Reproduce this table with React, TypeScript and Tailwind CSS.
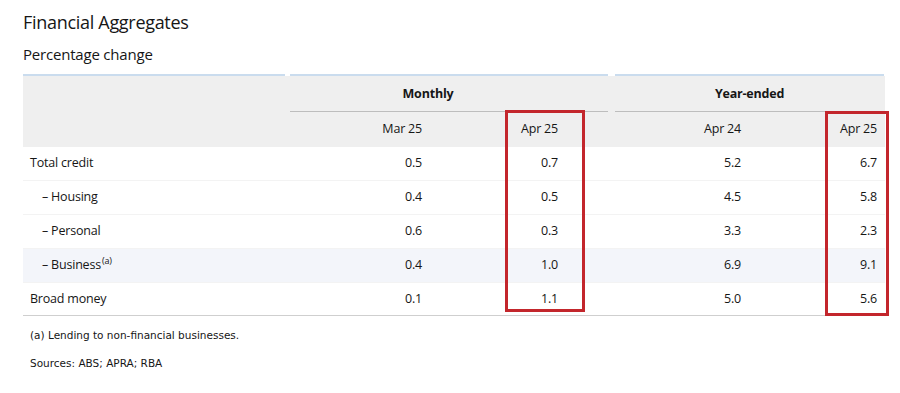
import React from "react";

const rows = [
    { label: "Total credit", indent: false, sup: false, shade: false, v: ["0.5", "0.7", "5.2", "6.7"] },
    { label: "– Housing", indent: true, sup: false, shade: false, v: ["0.4", "0.5", "4.5", "5.8"] },
    { label: "– Personal", indent: true, sup: false, shade: false, v: ["0.6", "0.3", "3.3", "2.3"] },
    { label: "– Business", indent: true, sup: true, shade: true, v: ["0.4", "1.0", "6.9", "9.1"] },
    { label: "Broad money", indent: false, sup: false, shade: false, v: ["0.1", "1.1", "5.0", "5.6"] },
];

const grid = "grid grid-cols-[267px_140px_136px_48px_135px_136px]";

export default function App() {
    return (
        <div className="w-[900px] h-[393px] bg-white text-[#161616] overflow-hidden" style={{ fontFamily: "'Open Sans', 'Noto Sans', sans-serif" }}>
            <div className="pl-[23px] pt-[10px]">
                <h1 className="text-[18px] leading-[24px] tracking-[-0.3px]">Financial Aggregates</h1>
                <h2 className="mt-[10px] text-[15px] leading-[20px] tracking-[-0.2px]">Percentage change</h2>

                <div className="relative mt-[10px] w-[862px] text-[12.5px] tracking-[-0.2px]">
                    {/* top rules */}
                    <div className="flex h-[2px]">
                        <div className="w-[262px] bg-[#cadcee]" />
                        <div className="ml-[5px] w-[318px] bg-[#cadcee]" />
                        <div className="ml-[7px] w-[269px] bg-[#cadcee]" />
                    </div>

                    {/* header */}
                    <div className={`${grid} bg-[#efefef]`}>
                        <div className="h-[36px]" />
                        <div className="col-span-3 flex flex-col">
                            <div className="flex-1 flex items-center justify-center pr-[48px] pt-[2px] font-bold">Monthly</div>
                            <div className="mr-[6px] h-px bg-[#bdbdbd]" />
                        </div>
                        <div className="col-span-2 flex flex-col">
                            <div className="flex-1 flex items-center justify-center pt-[2px] font-bold">Year-ended</div>
                            <div className="ml-px h-px bg-[#bdbdbd]" />
                        </div>
                        <div className="h-[35px]" />
                        <div className="flex items-center justify-end pr-[8px]">Mar 25</div>
                        <div className="flex items-center justify-end pr-[8px]">Apr 25</div>
                        <div />
                        <div className="flex items-center justify-end pr-[8px]">Apr 24</div>
                        <div className="flex items-center justify-end pr-[8px]">Apr 25</div>
                    </div>

                    {/* body */}
                    {rows.map((r, i) => (
                        <div
                            key={r.label}
                            className={`${grid} ${i === rows.length - 1 ? "h-[33px] border-b border-[#cfcfcf]" : "h-[34px] border-b border-[#f3f3f3]"} ${r.shade ? "bg-[#f3f5fa]" : "bg-white"}`}
                        >
                            <div className={`flex items-center ${r.indent ? "pl-[19px]" : "pl-[7px]"}`}>
                                {r.label}
                                {r.sup && <sup className="text-[9px] ml-px -top-[5px]">(a)</sup>}
                            </div>
                            <div className="flex items-center justify-end pr-[8px]">{r.v[0]}</div>
                            <div className="flex items-center justify-end pr-[8px]">{r.v[1]}</div>
                            <div />
                            <div className="flex items-center justify-end pr-[8px]">{r.v[2]}</div>
                            <div className="flex items-center justify-end pr-[8px]">{r.v[3]}</div>
                        </div>
                    ))}

                    {/* highlight boxes */}
                    <div className="absolute left-[482px] top-[36px] w-[80px] h-[202px] border-[3px] border-[#c3262c]" />
                    <div className="absolute left-[802px] top-[37px] w-[64px] h-[205px] border-[3px] border-[#c3262c]" />
                </div>

                <div className="pl-[7px] pt-[11px] text-[10.5px] leading-[16px]" style={{ fontFamily: "'DejaVu Sans', sans-serif" }}>
                    <p>(a) Lending to non-financial businesses.</p>
                    <p className="mt-[12px]">Sources: ABS; APRA; RBA</p>
                </div>
            </div>
        </div>
    );
}
